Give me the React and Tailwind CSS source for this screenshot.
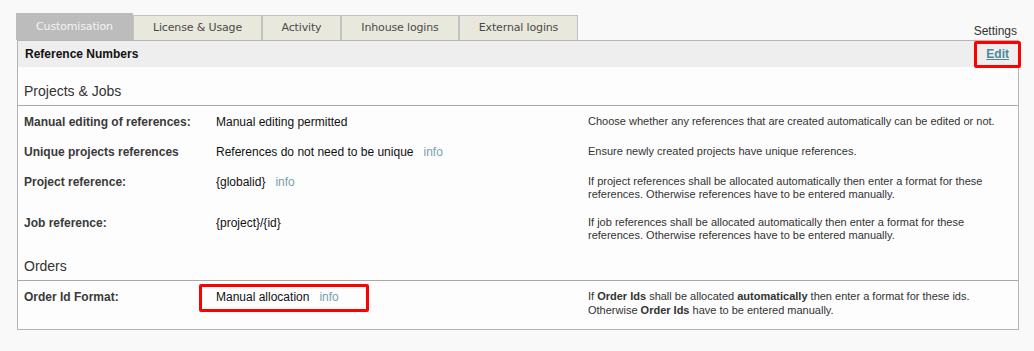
import React from "react";

const tabs = [
  { label: "License & Usage", w: "w-[129px]" },
  { label: "Activity", w: "w-[79px]" },
  { label: "Inhouse logins", w: "w-[118px]" },
  { label: "External logins", w: "w-[119px]" },
];

function Info() {
  return <span className="ml-[10px] text-[#7a9fae]">info</span>;
}

function Row({ label, value, desc, last }) {
  return (
    <div
      className={
        "grid grid-cols-[192px_372px_1fr] pl-[6px] pt-[9px] " +
        (last ? "pb-[12px]" : "pb-[7px]")
      }
    >
      <div className="text-[12px] leading-[14px] font-bold text-[#3a3a3a]">{label}</div>
      <div className="text-[12px] leading-[14px] text-[#111]">{value}</div>
      <div
        className={
          "text-[11px] text-[#333] pr-[10px] " +
          (last ? "leading-[13.5px]" : "leading-[12.5px]")
        }
      >
        {desc}
      </div>
    </div>
  );
}

export default function App() {
  return (
    <div className="w-[1034px] h-[351px] bg-[#f9f9f9] pt-[13px] font-['Liberation_Sans',Arial,sans-serif]">
      {/* tab strip */}
      <div className="flex items-end ml-[16px] w-[1002px]">
        <div className="w-[117px] h-[27px] pt-[2px] bg-[#bcbcbc] text-[#f4f4f4] flex items-center justify-center text-[11px] font-['DejaVu_Sans',Verdana,sans-serif] tracking-[-0.15px]">
          Customisation
        </div>
        {tabs.map((t) => (
          <div
            key={t.label}
            className={
              t.w +
              " h-[25px] bg-[#e9e8dc] border border-b-0 border-[#c2c2c2] text-[#4a4a4a] flex items-center justify-center text-[11px] font-['DejaVu_Sans',Verdana,sans-serif] tracking-[-0.15px]"
            }
          >
            {t.label}
          </div>
        ))}
        <div className="ml-auto mb-[2px] pr-[1px] text-[12px] leading-[14px] text-[#333]">
          Settings
        </div>
      </div>

      {/* panel */}
      <div className="ml-[17px] w-[1002px] border border-[#b4b4b4] bg-[#fdfdfd]">
        <div className="h-[26px] bg-[#eeeeee] flex items-center pl-[7px] pr-[9px]">
          <span className="text-[12px] font-bold text-[#111]">Reference Numbers</span>
          <span className="relative ml-auto text-[12px] leading-[14px] font-bold text-[#4d8896] underline">
            Edit
            <span className="absolute -left-[12px] -top-[6px] w-[47px] h-[27px] border-[3px] border-[#ff0000] rounded-[2px]"></span>
          </span>
        </div>

        <div className="pt-[16px] pb-[6px] pl-[6px] text-[14px] leading-[16px] text-[#333] border-b border-[#a8a8a8]">
          Projects &amp; Jobs
        </div>

        <Row
          label="Manual editing of references:"
          value="Manual editing permitted"
          desc="Choose whether any references that are created automatically can be edited or not."
        />
        <Row
          label="Unique projects references"
          value={
            <>
              References do not need to be unique
              <Info />
            </>
          }
          desc="Ensure newly created projects have unique references."
        />
        <Row
          label="Project reference:"
          value={
            <>
              {"{globalid}"}
              <Info />
            </>
          }
          desc="If project references shall be allocated automatically then enter a format for these references. Otherwise references have to be entered manually."
        />
        <Row
          label="Job reference:"
          value={"{project}/{id}"}
          desc="If job references shall be allocated automatically then enter a format for these references. Otherwise references have to be entered manually."
        />

        <div className="pt-[10px] pb-[6px] pl-[6px] text-[14px] leading-[16px] text-[#333] border-b border-[#a8a8a8]">
          Orders
        </div>

        <Row
          last
          label="Order Id Format:"
          value={
            <span className="relative inline-block">
              Manual allocation
              <Info />
              <span className="absolute -left-[17px] -top-[6px] w-[170px] h-[28px] border-[3px] border-[#ff0000] rounded-[2px]"></span>
            </span>
          }
          desc={
            <>
              If <b>Order Ids</b> shall be allocated <b>automatically</b> then enter a format for these ids.
              Otherwise <b>Order Ids</b> have to be entered manually.
            </>
          }
        />
      </div>
    </div>
  );
}
